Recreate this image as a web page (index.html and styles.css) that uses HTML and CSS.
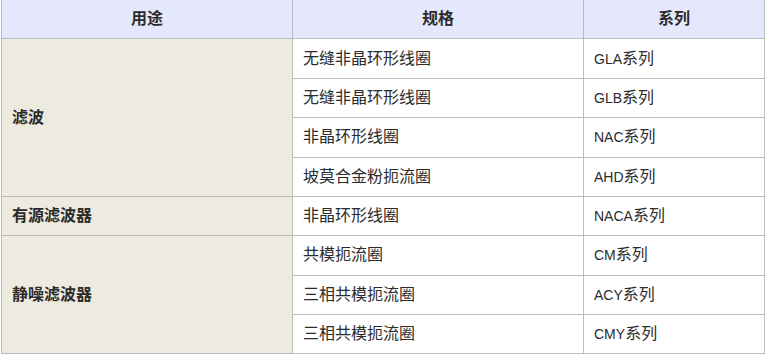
FILE: index.html
```html
<!DOCTYPE html>
<html lang="zh">
<head>
<meta charset="utf-8">
<link rel="stylesheet" href="styles.css">
</head>
<body>
<table class="spec">
  <thead>
    <tr><th class="c1">用途</th><th class="c2">规格</th><th class="c3">系列</th></tr>
  </thead>
  <tbody>
    <tr><td class="use" rowspan="4">滤波</td><td>无缝非晶环形线圈</td><td><span class="code">GLA</span>系列</td></tr>
    <tr><td>无缝非晶环形线圈</td><td><span class="code">GLB</span>系列</td></tr>
    <tr><td>非晶环形线圈</td><td><span class="code">NAC</span>系列</td></tr>
    <tr><td>坡莫合金粉扼流圈</td><td><span class="code">AHD</span>系列</td></tr>
    <tr><td class="use">有源滤波器</td><td>非晶环形线圈</td><td><span class="code">NACA</span>系列</td></tr>
    <tr><td class="use" rowspan="3">静噪滤波器</td><td>共模扼流圈</td><td><span class="code">CM</span>系列</td></tr>
    <tr><td>三相共模扼流圈</td><td><span class="code">ACY</span>系列</td></tr>
    <tr><td>三相共模扼流圈</td><td><span class="code">CMY</span>系列</td></tr>
  </tbody>
</table>
</body>
</html>
```
FILE: styles.css
```css
html, body {
  margin: 0;
  padding: 0;
  background: #ffffff;
}
body {
  font-family: "Liberation Sans", "Noto Sans CJK SC", sans-serif;
  font-size: 16px;
  color: #2b2b2b;
}
.spec {
  border-collapse: collapse;
  margin: -1px 0 0 1px;
  table-layout: fixed;
  width: 763px;
}
.spec th, .spec td {
  border: 1px solid #bcbcbc;
  padding: 0 10px;
  height: 39.375px;
  box-sizing: border-box;
  line-height: 20px;
  vertical-align: middle;
}
.spec th {
  background: #e5e8fc;
  font-weight: bold;
  text-align: center;
  color: #2b2b2b;
}
.c1 { width: 291px; }
.c2 { width: 291px; }
.c3 { width: 181px; }
.spec td {
  text-align: left;
}
.spec td.use {
  background: #edeae0;
  font-weight: bold;
}
.code {
  font-size: 14px;
}
```
